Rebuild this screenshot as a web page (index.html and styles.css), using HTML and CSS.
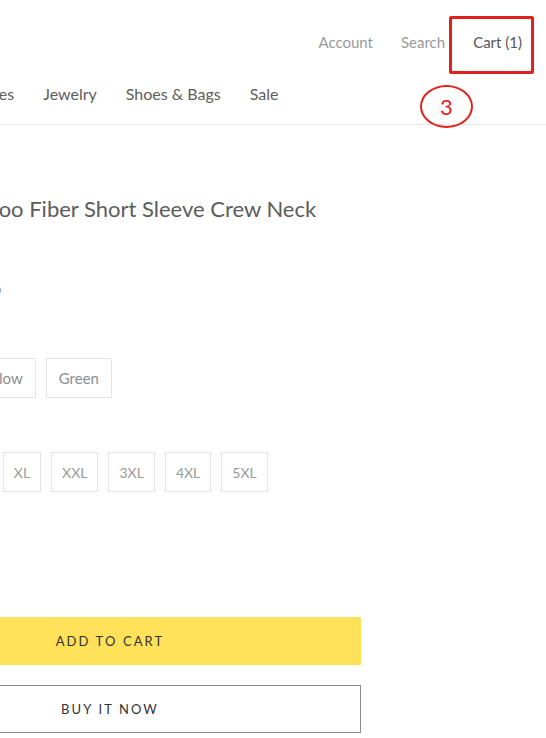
FILE: index.html
```html
<!DOCTYPE html>
<html lang="en">
<head>
<meta charset="utf-8">
<title>Product</title>
<link rel="stylesheet" href="styles.css">
</head>
<body>
<div class="page">
  <header class="header">
    <div class="topbar">
      <a class="top-link">Account</a>
      <a class="top-link">Search</a>
      <a class="top-link active">Cart (1)</a>
    </div>
    <nav class="nav">
      <a class="nav-link">Clothing</a>
      <a class="nav-link">Accessories</a>
      <a class="nav-link">Jewelry</a>
      <a class="nav-link">Shoes &amp; Bags</a>
      <a class="nav-link">Sale</a>
    </nav>
  </header>

  <main class="product">
    <h1 class="title">Women's Bamboo Fiber Short Sleeve Crew Neck</h1>
    <div class="price-row">
      <span class="price">$29.99</span>
      <span class="price-old">$39.99</span>
    </div>

    <div class="option">
      <div class="option-label">Color</div>
      <div class="choices colors">
        <span class="choice">Navy Blue</span>
        <span class="choice">Yellow</span>
        <span class="choice">Green</span>
      </div>
    </div>

    <div class="option">
      <div class="option-label">Size</div>
      <div class="choices sizes">
        <span class="choice">S</span>
        <span class="choice">M</span>
        <span class="choice">L</span>
        <span class="choice">XL</span>
        <span class="choice">XXL</span>
        <span class="choice">3XL</span>
        <span class="choice">4XL</span>
        <span class="choice">5XL</span>
      </div>
    </div>

    <div class="actions">
      <button class="btn btn-cart">ADD TO CART</button>
      <button class="btn btn-buy">BUY IT NOW</button>
    </div>
  </main>

  <div class="mark-box"></div>
  <div class="mark-circle">3</div>
</div>
</body>
</html>
```

FILE: styles.css
```css
* { box-sizing: border-box; }
html, body { margin: 0; padding: 0; }
body {
  width: 546px;
  height: 738px;
  overflow: hidden;
  background: #fff;
  font-family: "Lato", "Liberation Sans", sans-serif;
  color: #5c5c5c;
}
.page { position: relative; width: 546px; height: 738px; overflow: hidden; }

.header { border-bottom: 1px solid #e6e6e6; }
.topbar {
  display: flex;
  justify-content: flex-end;
  gap: 28px;
  padding: 32px 24px 0 0;
  line-height: 20px;
  font-size: 15px;
}
.top-link { color: #9a9a9a; }
.top-link.active { color: #555; }

.nav {
  display: flex;
  gap: 29px;
  margin: 31px 0 0 -156px;
  padding-bottom: 19px;
  line-height: 22px;
  font-size: 16px;
  white-space: nowrap;
}
.nav-link { color: #5e5e5e; }

.product { width: 502px; margin-left: -141px; }
.title {
  margin: 69px 0 0 -11px;
  font-size: 22px;
  font-weight: 400;
  line-height: 30px;
  color: #5c5c5c;
  white-space: nowrap;
}
.price-row {
  display: flex;
  gap: 30px;
  margin-top: 56px;
  font-size: 18px;
  line-height: 24px;
  color: #8a8a8a;
}
.price-old { color: #9a9a9a; }
.option { margin-top: 20px; }
.option-label {
  height: 20px;
  line-height: 20px;
  font-size: 14px;
  color: #fff;
}
.choices {
  display: flex;
  gap: 10px;
  margin-top: 14px;
}
.choice {
  height: 40px;
  padding: 0 10px;
  border: 1px solid #e4e4e4;
  display: flex;
  align-items: center;
  font-size: 14px;
  color: #9a9a9a;
  white-space: nowrap;
}
.colors { margin-left: 5px; }
.colors .choice { padding: 0 12px; font-size: 15px; color: #8c8c8c; }
.sizes { margin-left: 20px; }

.actions {
  margin-top: 125px;
  display: flex;
  flex-direction: column;
  gap: 20px;
}
.btn {
  height: 48px;
  width: 100%;
  font-family: "Lato", "Liberation Sans", sans-serif;
  font-size: 13px;
  letter-spacing: 2.1px;
  color: #333;
  cursor: pointer;
}
.btn-cart { background: #ffe15a; border: none; }
.btn-buy { background: #fff; border: 1px solid #8a8a8a; }

.mark-box {
  position: absolute;
  left: 449px;
  top: 16px;
  width: 85px;
  height: 58px;
  border: 3px solid #e3211c;
  border-radius: 2px;
}
.mark-circle {
  position: absolute;
  left: 420px;
  top: 85px;
  width: 53px;
  height: 43px;
  border: 2px solid #e3211c;
  border-radius: 50%;
  display: flex;
  align-items: center;
  justify-content: center;
  font-size: 22px;
  color: #e3211c;
}
```
